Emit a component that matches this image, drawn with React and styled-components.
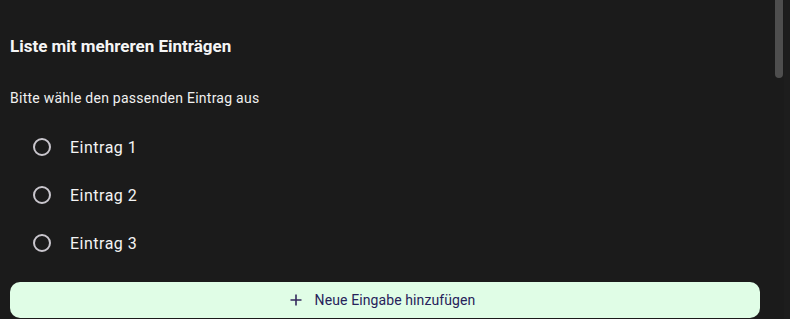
import React from "react";
import styled, { createGlobalStyle } from "styled-components";

const Global = createGlobalStyle`
  html, body { margin: 0; padding: 0; background: #1b1b1b; overflow: hidden; }
  body { font-family: Roboto, "Noto Sans", sans-serif; color: #f2f2f2; }
`;

const Page = styled.main`
  box-sizing: border-box;
  width: 775px;
  padding: 34px 15px 0 10px;
`;

const Title = styled.h2`
  margin: 0;
  font-size: 17px;
  line-height: 24px;
  font-weight: 700;
  color: #f5f5f5;
`;

const Subtitle = styled.p`
  margin: 30px 0 0;
  font-size: 14px;
  line-height: 20px;
  letter-spacing: 0.25px;
  color: #f0f0f0;
`;

const Group = styled.div`
  margin-top: 15px;
  display: flex;
  flex-direction: column;
`;

const Row = styled.label`
  display: flex;
  align-items: center;
  height: 48px;
  padding-left: 23px;
  gap: 19px;
  cursor: pointer;
  font-size: 16px;
  letter-spacing: 0.5px;
  color: #f4f4f4;
`;

const Circle = styled.span`
  box-sizing: border-box;
  width: 18px;
  height: 18px;
  border-radius: 50%;
  border: 2px solid #c9c6cd;
`;

const AddButton = styled.button`
  margin-top: 15px;
  width: 100%;
  height: 36px;
  border: none;
  border-radius: 10px;
  background: #e0fde6;
  color: #27225a;
  font-family: Roboto, "Noto Sans", sans-serif;
  font-size: 14px;
  letter-spacing: 0.1px;
  display: flex;
  align-items: center;
  justify-content: center;
  gap: 13px;
  padding: 0 5px 0 0;
  cursor: pointer;
`;

const ScrollTrack = styled.div`
  position: fixed;
  top: 0;
  right: 0;
  width: 15px;
  height: 100vh;
  background: #1b1b1b;
  box-sizing: border-box;
`;

const ScrollThumb = styled.div`
  position: absolute;
  top: 0;
  left: 0;
  width: 8px;
  height: 78px;
  border-radius: 0 0 4px 4px;
  background: #4e4e4e;
`;

const EdgeLine = styled.div`
  position: absolute;
  top: 0;
  right: 0;
  width: 6px;
  height: 100%;
  background: #1d1d1d;
`;

const PlusIcon = () => (
  <svg width="12" height="12" viewBox="0 0 12 12" aria-hidden="true">
    <path d="M6 0.5v11M0.5 6h11" stroke="#352a5e" strokeWidth="1.6" fill="none" />
  </svg>
);

const entries = ["Eintrag 1", "Eintrag 2", "Eintrag 3"];

export default function App() {
  return (
    <>
      <Global />
      <Page>
        <Title>Liste mit mehreren Einträgen</Title>
        <Subtitle>Bitte wähle den passenden Eintrag aus</Subtitle>
        <Group role="radiogroup">
          {entries.map((e) => (
            <Row key={e}>
              <Circle />
              {e}
            </Row>
          ))}
        </Group>
        <AddButton>
          <PlusIcon />
          Neue Eingabe hinzufügen
        </AddButton>
      </Page>
      <ScrollTrack>
        <EdgeLine />
        <ScrollThumb />
      </ScrollTrack>
    </>
  );
}
